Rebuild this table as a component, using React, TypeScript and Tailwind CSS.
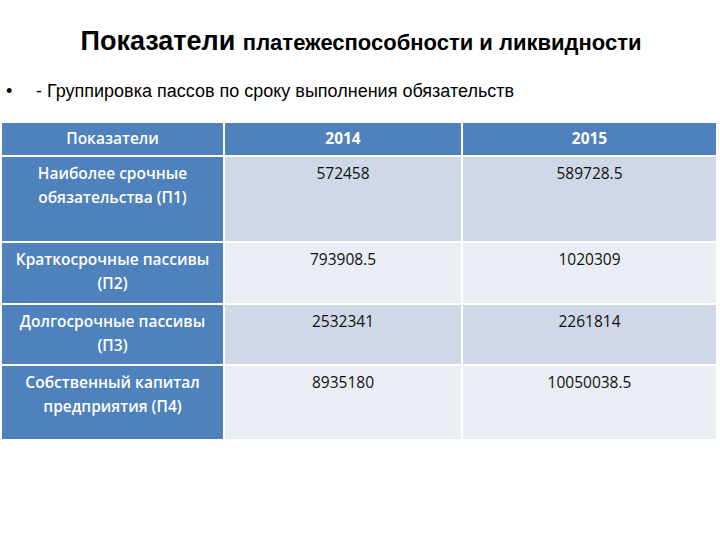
import React from 'react';

const rows = [
  { label: ['Наиболее срочные', 'обязательства (П1)'], a: '572458', b: '589728.5', h: 'h-[84px]', bg: 'bg-[#d0d8e8]' },
  { label: ['Краткосрочные пассивы', '(П2)'], a: '793908.5', b: '1020309', h: 'h-[60px]', bg: 'bg-[#e9edf4]' },
  { label: ['Долгосрочные пассивы', '(П3)'], a: '2532341', b: '2261814', h: 'h-[59px]', bg: 'bg-[#d0d8e8]' },
  { label: ['Собственный капитал', 'предприятия (П4)'], a: '8935180', b: '10050038.5', h: 'h-[73px]', bg: 'bg-[#e9edf4]' },
];

export default function App() {
  return (
    <div className="w-[720px] h-[540px] bg-white overflow-hidden font-['Liberation_Sans',Arial,sans-serif]">
      {/* Title */}
      <div className="pt-[28px] pl-[2px] text-center text-black font-bold leading-none">
        <span className="text-[27px]">Показатели </span>
        <span className="text-[22px]">платежеспособности и ликвидности</span>
      </div>

      {/* Bullet */}
      <div className="mt-[27px] flex items-center text-[18px] text-black leading-none">
        <span className="w-[36px] pl-[6px]">•</span>
        <span>- Группировка пассов по сроку выполнения обязательств</span>
      </div>

      {/* Table */}
      <div className="mt-[23px] ml-[2px] w-[715px] grid grid-cols-[221px_236px_253px] gap-[2px] font-['Open_Sans',sans-serif] text-[15.5px]">
        <div className="h-[32px] bg-[#4f81bd] text-white font-semibold flex items-center justify-center">Показатели</div>
        <div className="h-[32px] bg-[#4f81bd] text-white font-bold flex items-center justify-center">2014</div>
        <div className="h-[32px] bg-[#4f81bd] text-white font-bold flex items-center justify-center">2015</div>
        {rows.map((r) => (
          <React.Fragment key={r.a}>
            <div className={`${r.h} bg-[#4f81bd] text-white text-center leading-[24px] pt-[4px] font-semibold`}>
              {r.label.map((l) => (
                <div key={l}>{l}</div>
              ))}
            </div>
            <div className={`${r.h} ${r.bg} text-[#111] text-center leading-[24px] pt-[4px]`}>{r.a}</div>
            <div className={`${r.h} ${r.bg} text-[#111] text-center leading-[24px] pt-[4px]`}>{r.b}</div>
          </React.Fragment>
        ))}
      </div>
    </div>
  );
}
